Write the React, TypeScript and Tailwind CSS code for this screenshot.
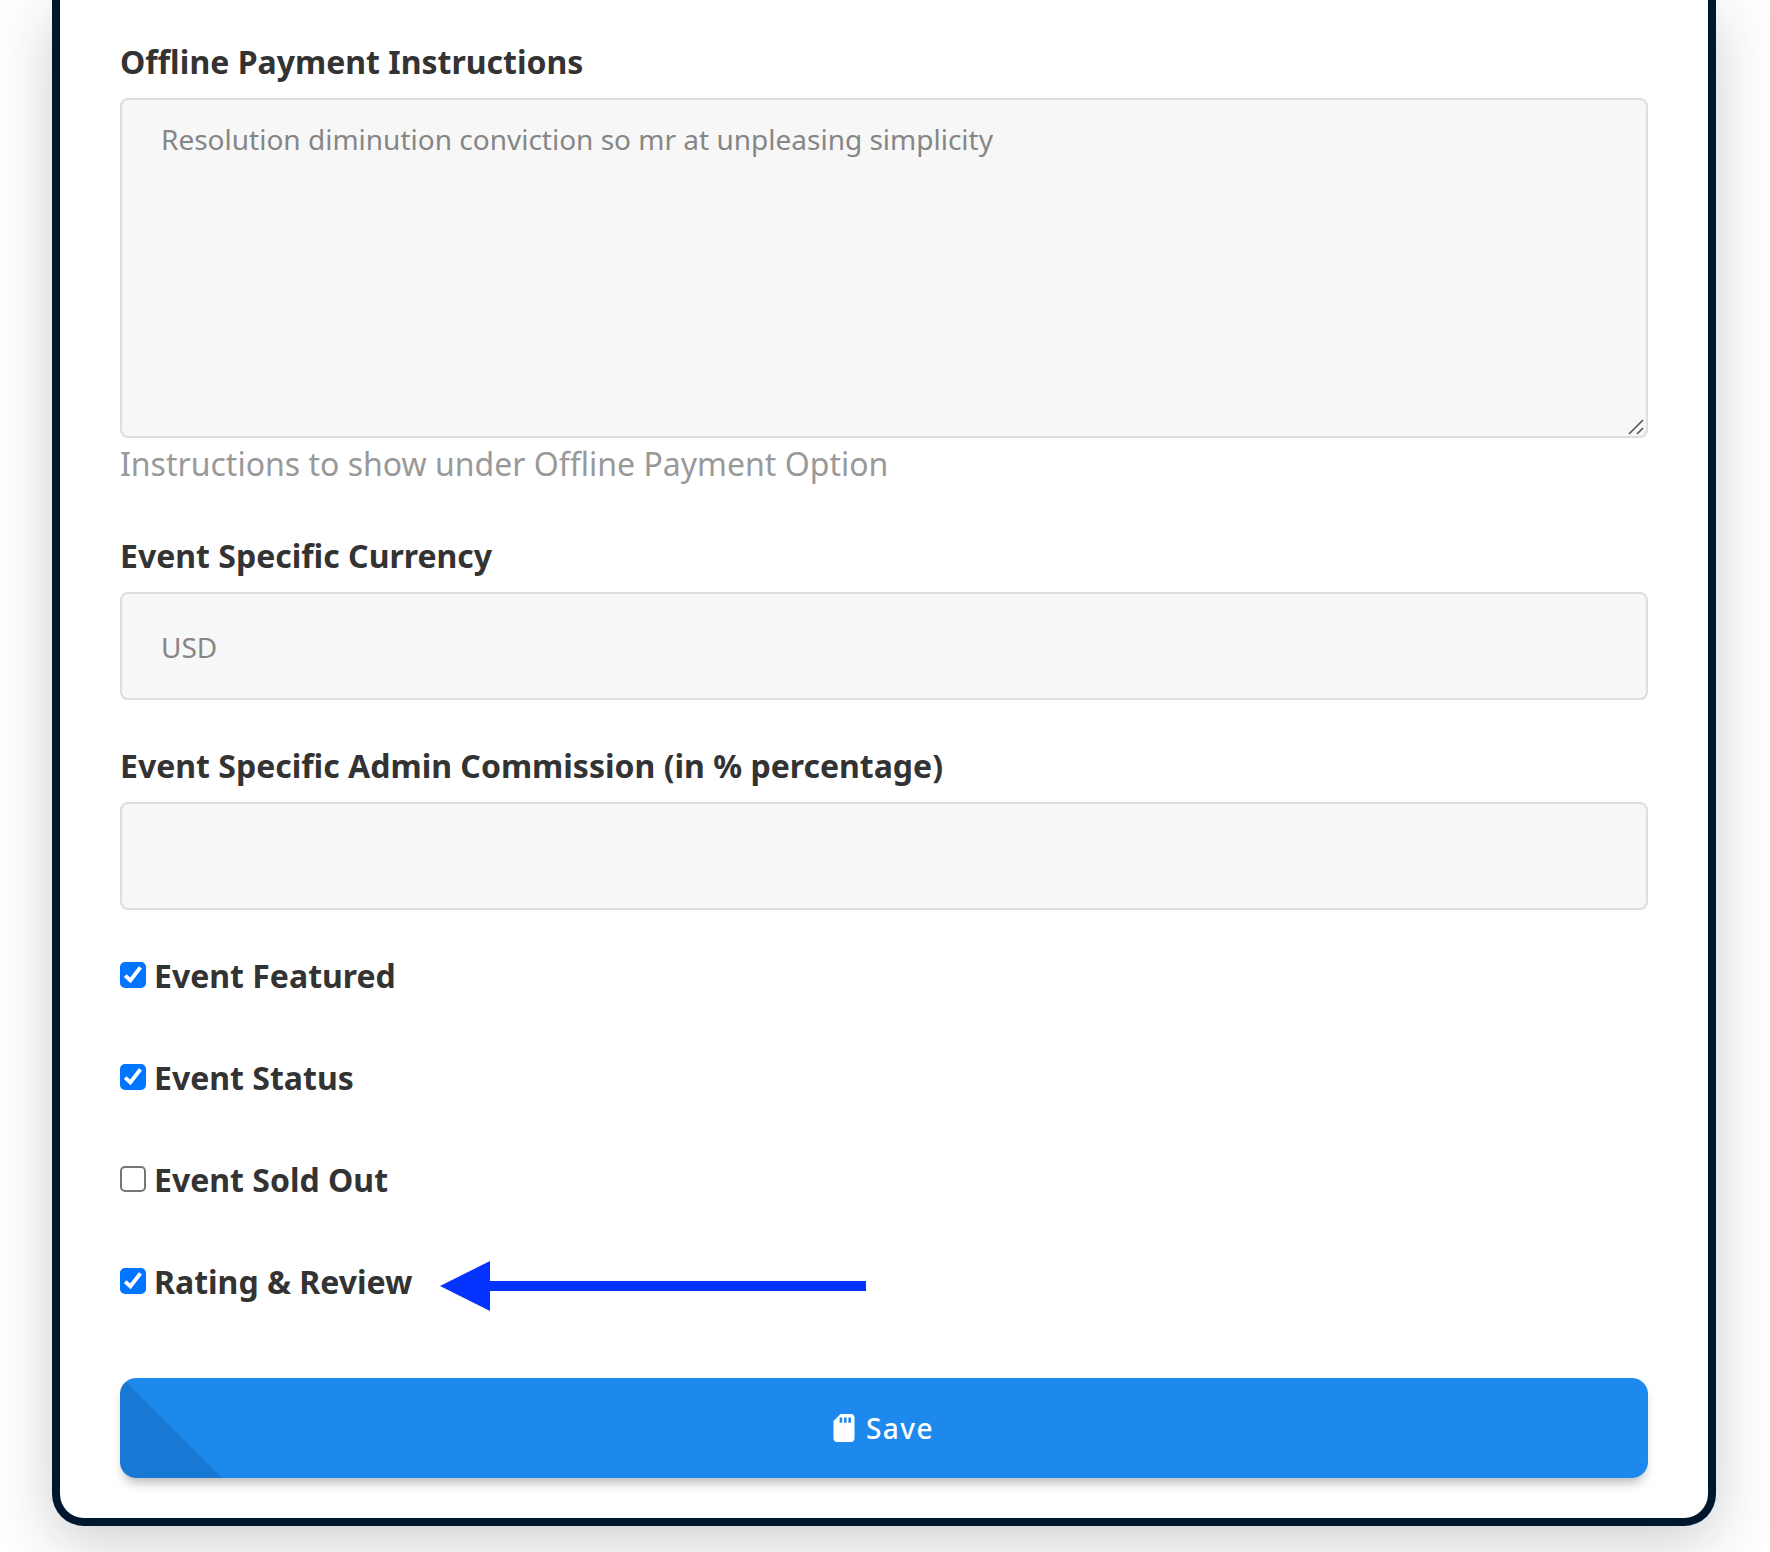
import { useState } from "react";
import type { ReactNode } from "react";
import { FaSdCard } from "react-icons/fa";

const fieldClass =
  "block w-full rounded-lg border-2 border-[#dddddd] bg-[#f7f7f7] px-[39px] text-[28px] text-[#868686] outline-none focus:border-[#1d89ed]";

function Label({ htmlFor, children }: { htmlFor: string; children: ReactNode }) {
  return (
    <label htmlFor={htmlFor} className="mb-3 block text-[32px] leading-12 font-bold text-[#333333]">
      {children}
    </label>
  );
}

function CheckRow({
  id,
  label,
  initial,
  children,
}: {
  id: string;
  label: string;
  initial: boolean;
  children?: ReactNode;
}) {
  const [checked, setChecked] = useState(initial);
  return (
    <div className="flex h-12 items-center">
      <span className="mr-2 mb-0.5 grid size-[26px] shrink-0 place-items-center">
        <input
          id={id}
          type="checkbox"
          checked={checked}
          onChange={(e) => setChecked(e.target.checked)}
          className="peer col-start-1 row-start-1 size-[26px] appearance-none rounded-[5px] border-2 border-[#767676] bg-white checked:border-[#0075ff] checked:bg-[#0075ff]"
        />
        <svg
          viewBox="0 0 26 26"
          aria-hidden="true"
          className="pointer-events-none invisible col-start-1 row-start-1 size-[26px] fill-none stroke-white stroke-[4] peer-checked:visible"
        >
          <path d="M5.2 13.6 L10.4 18.4 L20.4 5.4" />
        </svg>
      </span>
      <label htmlFor={id} className="text-[32px] leading-12 font-bold text-[#333333]">
        {label}
      </label>
      {children}
    </div>
  );
}

export default function App() {
  const [instructions, setInstructions] = useState("");
  const [currency, setCurrency] = useState("");
  const [commission, setCommission] = useState("");

  return (
    <div className="overflow-hidden bg-white pr-[54px] pb-[26px] pl-[52px] font-['Noto_Sans',sans-serif]">
      <form
        onSubmit={(e) => e.preventDefault()}
        className="rounded-b-[32px] border-8 border-t-0 border-[#00182e] bg-white px-[60px] pt-[38px] pb-10 shadow-[0_16px_60px_rgba(20,30,40,0.22)]"
      >
        <Label htmlFor="instructions">Offline Payment Instructions</Label>
        <div className="relative">
          <textarea
            id="instructions"
            value={instructions}
            onChange={(e) => setInstructions(e.target.value)}
            placeholder="Resolution diminution conviction so mr at unpleasing simplicity"
            className={`${fieldClass} h-[340px] resize-none py-5 leading-[38px] placeholder:text-[#868686]`}
          />
          <svg
            viewBox="0 0 16 16"
            aria-hidden="true"
            className="pointer-events-none absolute right-1 bottom-[3px] size-4 fill-none stroke-[#555555] stroke-[1.6]"
          >
            <path d="M1 15 L15 1 M9 15 L15 9" />
          </svg>
        </div>
        <p className="mt-0.5 text-[32px] leading-12 text-[#999999]">
          Instructions to show under Offline Payment Option
        </p>

        <div className="mt-11">
          <Label htmlFor="currency">Event Specific Currency</Label>
          <input
            id="currency"
            value={currency}
            onChange={(e) => setCurrency(e.target.value)}
            placeholder="USD"
            className={`${fieldClass} h-[108px] pt-0.5 placeholder:text-[#868686]`}
          />
        </div>

        <div className="mt-[42px]">
          <Label htmlFor="commission">Event Specific Admin Commission (in % percentage)</Label>
          <input
            id="commission"
            value={commission}
            onChange={(e) => setCommission(e.target.value)}
            className={`${fieldClass} h-[108px] pt-0.5`}
          />
        </div>

        <div className="mt-[42px] flex flex-col gap-[54px]">
          <CheckRow id="featured" label="Event Featured" initial={true} />
          <CheckRow id="status" label="Event Status" initial={true} />
          <CheckRow id="soldout" label="Event Sold Out" initial={false} />
          <CheckRow id="rating" label="Rating & Review" initial={true}>
            <svg viewBox="0 0 426 50" aria-hidden="true" className="mt-2 ml-7 w-[426px] shrink-0 fill-[#0433ff]">
              <path d="M0 25 L50 0 V20 H426 V30 H50 V50 Z" />
            </svg>
          </CheckRow>
        </div>

        <button
          type="submit"
          className="mt-[72px] flex h-[100px] w-full items-center justify-center gap-2 rounded-2xl bg-[linear-gradient(45deg,#1779d4_72px,#1d89ed_73px)] pr-1 text-[28px] font-medium tracking-wider text-white shadow-[0_8px_12px_-4px_rgba(0,0,0,0.3)]"
        >
          <FaSdCard aria-hidden="true" />
          Save
        </button>
      </form>
    </div>
  );
}
